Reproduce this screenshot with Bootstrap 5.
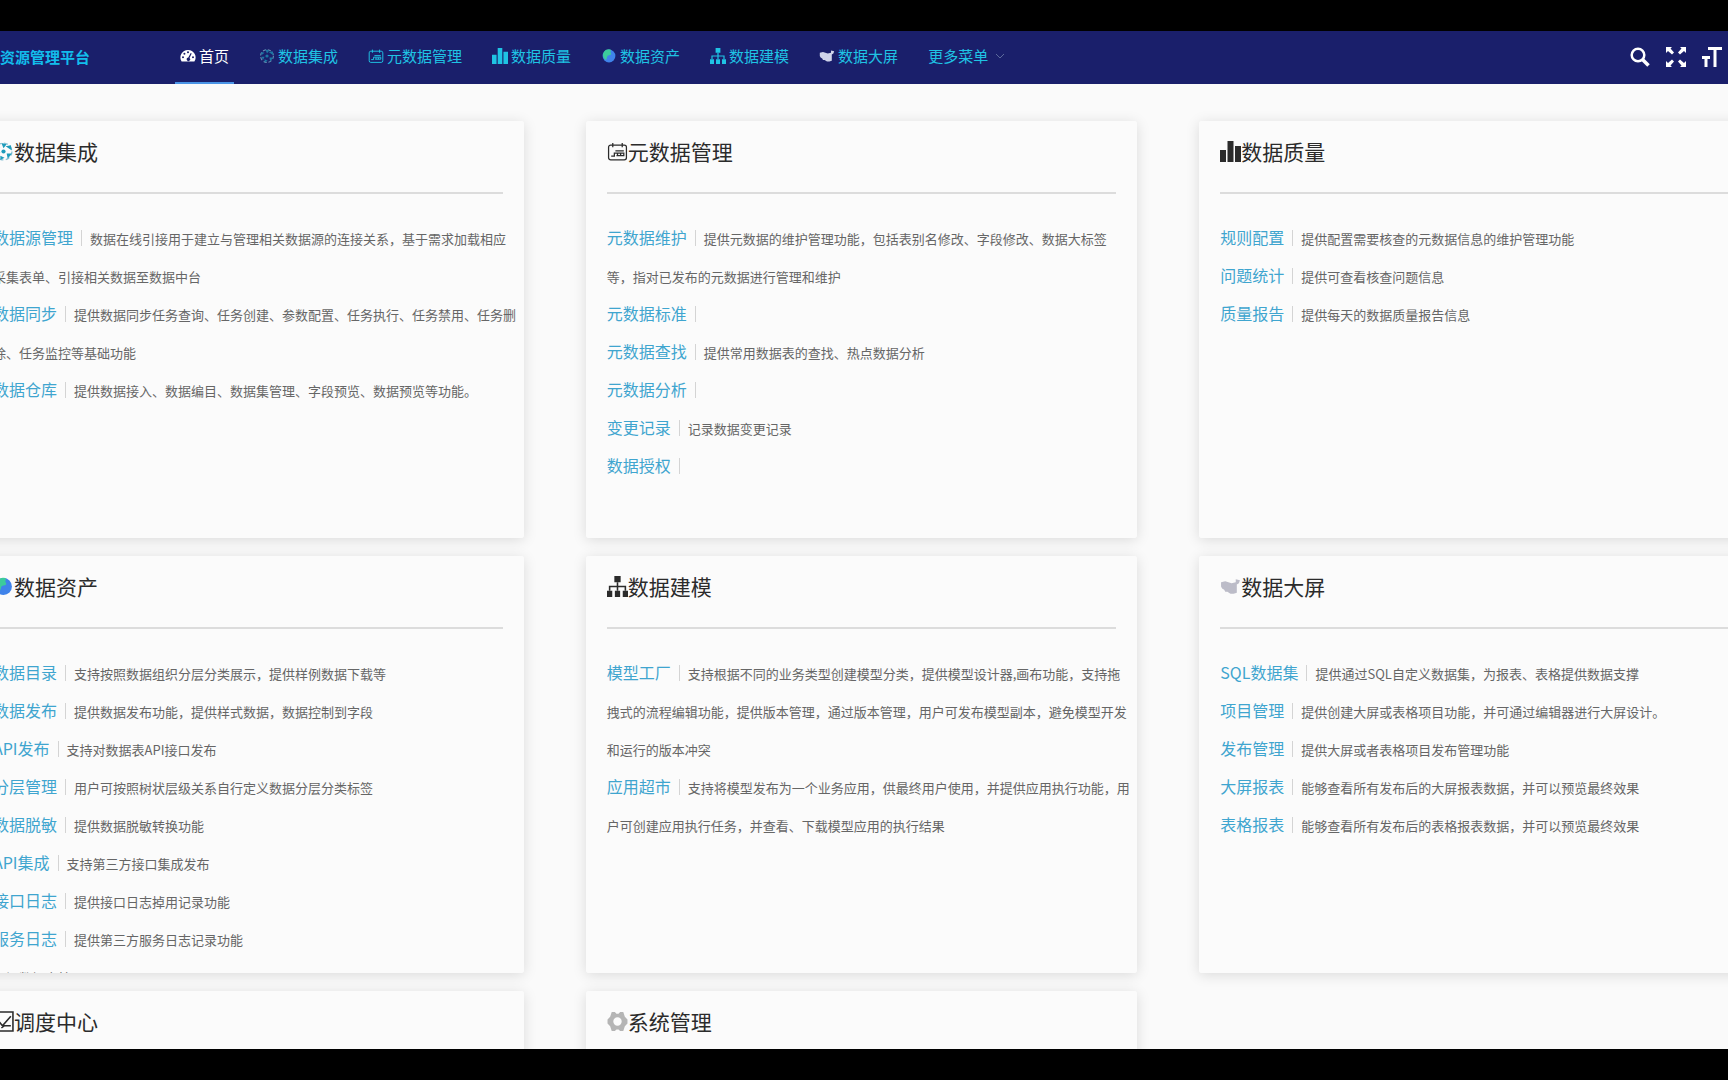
<!DOCTYPE html>
<html lang="zh-CN">
<head>
<meta charset="utf-8">
<meta name="viewport" content="width=device-width, initial-scale=1">
<title>数据资源管理平台</title>
<link href="https://cdn.jsdelivr.net/npm/bootstrap@5.3.0/dist/css/bootstrap.min.css" rel="stylesheet">
<style>
body{font-family:"Noto Sans","Noto Sans CJK SC",sans-serif;background:#000;font-size:16px}
:lang(zh-CN){font-family:"Noto Sans CJK SC","Noto Sans",sans-serif}
.screen{height:100vh;padding:31px 0}
.topbar{height:53px;background:#1a1f6b;flex:none;padding-right:6px}
.brand-name{margin-left:-30px;margin-right:85px;font-size:15px;font-weight:700;color:#12bdec;white-space:nowrap;text-decoration:none}
.menu{gap:20px}
.menu a,.menu button{display:flex;align-items:center;gap:3px;height:53px;padding:0 5px 2px;border:0;border-bottom:2px solid transparent;background:none;font-size:15px;line-height:20px;color:#1fc3e4;text-decoration:none;white-space:nowrap}
.menu .current{color:#fff;border-bottom-color:#4a94e6}
.menu svg{width:16px;height:16px}
.menu .chev{width:10px;height:10px;margin-left:4px;color:#5c6a9c}
.tools{gap:16px;padding-bottom:2px}
.tools button{display:flex;padding:0;border:0;background:none;color:#fff}
.tools svg{width:20px;height:20px}
.board{background:#fafafa;min-height:0}
.tiles{display:grid;grid-template-columns:repeat(3,minmax(0,1fr));gap:18px 62px;margin:37px -23px 0 -28px}
.tile{height:417px;overflow:hidden;background:#fbfbfb;border-radius:3px}
.tile-wrap{border-radius:3px;box-shadow:0 2px 14px rgba(0,0,0,.13)}
.tile-head{display:flex;align-items:center;height:73px;margin:0 21px;padding-bottom:11px;border-bottom:2px solid #dcdcdc;font-size:21px;font-weight:400;line-height:30px;color:#2b2b2b}
.tile-head svg{width:21px;height:21px;flex:none}
.entries{margin:0;padding:24px 4px 0 21px;list-style:none;line-height:38px;white-space:nowrap}
.entries a{line-height:1;color:#3fa5cf;text-decoration:none}
.entries a::after{content:"";display:inline-block;width:1px;height:16px;margin:0 8px 0 8px;background:#d4d4d4;vertical-align:-2px}
.entries span{font-size:13px;line-height:1;color:#666}
</style>
<script src="https://cdn.jsdelivr.net/npm/bootstrap@5.3.0/dist/js/bootstrap.bundle.min.js"></script>
</head>
<body>
<svg class="d-none" aria-hidden="true">
  <symbol id="i-gauge" viewBox="0 0 16 16"><path fill="currentColor" fill-rule="evenodd" d="M8 2a7.5 7.5 0 0 0-6.4 11.5h12.800A7.500 7.500 0 0 0 8 2zM8 3.200a1 1 0 1 1 0 2 1 1 0 0 1 0-2zM4.400 4.700a1 1 0 1 1 0 2 1 1 0 0 1 0-2zM3 8.300a1 1 0 1 1 0 2 1 1 0 0 1 0-2zM13 8.300a1 1 0 1 1 0 2 1 1 0 0 1 0-2zM10.700 5l1 .500-2.200 4.500a1.700 1.700 0 1 1-1.200-.400z"/></symbol>
  <symbol id="i-hub" viewBox="0 0 20 20"><g fill="none" stroke="#8fc4d6" stroke-width="1.300"><circle cx="10" cy="10" r="8" stroke-dasharray="4 2.300"/></g><g fill="#1d9bbb"><path d="M8 2l5 1-3 4zM12 5l5-1 1 5zM13 12l5 0-4 5zM7 14l4 2-4 2zM3 11l4 0-2 4zM3 5l4 1-4 3z"/><circle cx="10" cy="10" r="2"/></g></symbol>
  <symbol id="i-meta" viewBox="0 0 20 20"><g fill="none" stroke="currentColor" stroke-width="1.200"><rect x="1.500" y="4" width="17" height="14" rx="2"/><path d="M5.500 2v4M14.500 2v4M4 14.500h3v-3h9v2.500h-7M8 9.500h8M10 12v2M13 12v2"/></g></symbol>
  <symbol id="i-bars" viewBox="0 0 21 21"><path fill="currentColor" d="M0 9h6v12H0zM7.500 0h6v21h-6zM15 5h6v16h-6z"/></symbol>
  <symbol id="i-globe" viewBox="0 0 20 20"><circle cx="10" cy="10" r="8" fill="#3f83ea"/><path fill="#3ccb9b" d="M3 6a8 8 0 0 1 9-4c1 2-1 3 0 4s1 3-2 3-2 4-4 6a8 8 0 0 1-3-9z"/></symbol>
  <symbol id="i-tree" viewBox="0 0 20 20"><g fill="currentColor"><path d="M7 0h6v6H7zM0 14h5v6H0zM7.500 14h5v6h-5zM15 14h5v6h-5z"/></g><path fill="none" stroke="currentColor" stroke-width="1.500" d="M10 6v8M2.500 14v-4h15v4"/></symbol>
  <symbol id="i-map" viewBox="0 0 20 20"><path fill="currentColor" d="M1 6l4-1 3 1 3 1 4-1 0-3 4 1-1 3-2 1 0 4 0 4-3 1-3 0-3-2-2 0-1-2-2-1-1-2z"/></symbol>
  <symbol id="i-check" viewBox="0 0 20 20"><path fill="none" stroke="currentColor" stroke-width="1.500" d="M1 1h18v12M1 1v18h18v-6M4 8l5 6 8-9M8 16l3-2h6"/></symbol>
  <symbol id="i-gear" viewBox="0 0 20 20"><path fill="#b5b5b5" fill-rule="evenodd" d="M4.500 1h3l1.500 1.500h2L12.500 1h3l1.500 4.500 2.500 2.500v4L17 14.500 15.500 19h-3L11 17.500H9L7.500 19h-3L3 14.500.500 12V8L3 5.500zM10 6a4 4 0 1 0 0 8 4 4 0 0 0 0-8z"/></symbol>
</svg>
<div class="screen d-flex flex-column">
  <header class="topbar d-flex align-items-center overflow-hidden">
    <a class="brand-name" href="#">数据资源管理平台</a>
    <nav class="menu d-flex">
      <a class="current" href="#"><svg><use href="#i-gauge"/></svg>首页</a>
      <a href="#"><svg viewBox="0 0 20 20" opacity=".7"><use href="#i-hub"/></svg>数据集成</a>
      <a href="#"><svg><use href="#i-meta"/></svg>元数据管理</a>
      <a href="#"><svg><use href="#i-bars"/></svg>数据质量</a>
      <a href="#"><svg><use href="#i-globe"/></svg>数据资产</a>
      <a href="#"><svg><use href="#i-tree"/></svg>数据建模</a>
      <a href="#"><svg color="#cfd4ea"><use href="#i-map"/></svg>数据大屏</a>
      <button type="button">更多菜单<svg class="chev" viewBox="0 0 10 10"><path fill="none" stroke="currentColor" d="M1 3l4 4 4-4"/></svg></button>
    </nav>
    <div class="tools d-flex ms-auto">
      <button type="button" aria-label="搜索"><svg viewBox="0 0 20 20"><g fill="none" stroke="currentColor"><circle cx="8" cy="8" r="6.300" stroke-width="2.500"/><path stroke-width="3.600" d="M12.500 12.500l6 6"/></g></svg></button>
      <button type="button" aria-label="全屏"><svg viewBox="0 0 20 20"><path fill="currentColor" d="M0 0h6L4.500 1.500l3.500 4-2 2-4-3.500L0 6zM20 0h-6l1.500 1.500-3.500 4 2 2 4-3.500L20 6zM0 20h6l-1.500-1.500 3.500-4-2-2-4 3.500L0 14zM20 20h-6l1.500-1.500-3.500-4 2-2 4 3.500 2-2z"/></svg></button>
      <button type="button" aria-label="字号"><svg viewBox="0 0 20 20"><path fill="none" stroke="currentColor" stroke-width="3" d="M6 1.500h14M13 1v19M0 10.500h8M4 10v10"/></svg></button>
    </div>
  </header>
  <main class="board flex-grow-1 overflow-hidden">
    <div class="tiles">
      <section class="tile-wrap"><div class="tile">
        <h2 class="tile-head"><svg><use href="#i-hub"/></svg>数据集成</h2>
        <ul class="entries">
          <li><a href="#">数据源管理</a><span>数据在线引接用于建立与管理相关数据源的连接关系，基于需求加载相应<br>采集表单、引接相关数据至数据中台</span></li>
          <li><a href="#">数据同步</a><span>提供数据同步任务查询、任务创建、参数配置、任务执行、任务禁用、任务删<br>除、任务监控等基础功能</span></li>
          <li><a href="#">数据仓库</a><span>提供数据接入、数据编目、数据集管理、字段预览、数据预览等功能。</span></li>
        </ul>
      </div></section>
      <section class="tile-wrap"><div class="tile">
        <h2 class="tile-head"><svg><use href="#i-meta"/></svg>元数据管理</h2>
        <ul class="entries">
          <li><a href="#">元数据维护</a><span>提供元数据的维护管理功能，包括表别名修改、字段修改、数据大标签<br>等，指对已发布的元数据进行管理和维护</span></li>
          <li><a href="#">元数据标准</a></li>
          <li><a href="#">元数据查找</a><span>提供常用数据表的查找、热点数据分析</span></li>
          <li><a href="#">元数据分析</a></li>
          <li><a href="#">变更记录</a><span>记录数据变更记录</span></li>
          <li><a href="#">数据授权</a></li>
        </ul>
      </div></section>
      <section class="tile-wrap"><div class="tile">
        <h2 class="tile-head"><svg><use href="#i-bars"/></svg>数据质量</h2>
        <ul class="entries">
          <li><a href="#">规则配置</a><span>提供配置需要核查的元数据信息的维护管理功能</span></li>
          <li><a href="#">问题统计</a><span>提供可查看核查问题信息</span></li>
          <li><a href="#">质量报告</a><span>提供每天的数据质量报告信息</span></li>
        </ul>
      </div></section>
      <section class="tile-wrap"><div class="tile">
        <h2 class="tile-head"><svg><use href="#i-globe"/></svg>数据资产</h2>
        <ul class="entries">
          <li><a href="#">数据目录</a><span>支持按照数据组织分层分类展示，提供样例数据下载等</span></li>
          <li><a href="#">数据发布</a><span>提供数据发布功能，提供样式数据，数据控制到字段</span></li>
          <li><a href="#">API发布</a><span>支持对数据表API接口发布</span></li>
          <li><a href="#">分层管理</a><span>用户可按照树状层级关系自行定义数据分层分类标签</span></li>
          <li><a href="#">数据脱敏</a><span>提供数据脱敏转换功能</span></li>
          <li><a href="#">API集成</a><span>支持第三方接口集成发布</span></li>
          <li><a href="#">接口日志</a><span>提供接口日志掉用记录功能</span></li>
          <li><a href="#">服务日志</a><span>提供第三方服务日志记录功能</span></li>
          <li><span>订阅数据审核</span></li>
        </ul>
      </div></section>
      <section class="tile-wrap"><div class="tile">
        <h2 class="tile-head"><svg><use href="#i-tree"/></svg>数据建模</h2>
        <ul class="entries">
          <li><a href="#">模型工厂</a><span>支持根据不同的业务类型创建模型分类，提供模型设计器,画布功能，支持拖<br>拽式的流程编辑功能，提供版本管理，通过版本管理，用户可发布模型副本，避免模型开发<br>和运行的版本冲突</span></li>
          <li><a href="#">应用超市</a><span>支持将模型发布为一个业务应用，供最终用户使用，并提供应用执行功能，用<br>户可创建应用执行任务，并查看、下载模型应用的执行结果</span></li>
        </ul>
      </div></section>
      <section class="tile-wrap"><div class="tile">
        <h2 class="tile-head"><svg color="#bcbcc8"><use href="#i-map"/></svg>数据大屏</h2>
        <ul class="entries">
          <li><a href="#">SQL数据集</a><span>提供通过SQL自定义数据集，为报表、表格提供数据支撑</span></li>
          <li><a href="#">项目管理</a><span>提供创建大屏或表格项目功能，并可通过编辑器进行大屏设计。</span></li>
          <li><a href="#">发布管理</a><span>提供大屏或者表格项目发布管理功能</span></li>
          <li><a href="#">大屏报表</a><span>能够查看所有发布后的大屏报表数据，并可以预览最终效果</span></li>
          <li><a href="#">表格报表</a><span>能够查看所有发布后的表格报表数据，并可以预览最终效果</span></li>
        </ul>
      </div></section>
      <section class="tile-wrap"><div class="tile">
        <h2 class="tile-head"><svg><use href="#i-check"/></svg>调度中心</h2>
      </div></section>
      <section class="tile-wrap"><div class="tile">
        <h2 class="tile-head"><svg><use href="#i-gear"/></svg>系统管理</h2>
      </div></section>
    </div>
  </main>
</div>
</body>
</html>
